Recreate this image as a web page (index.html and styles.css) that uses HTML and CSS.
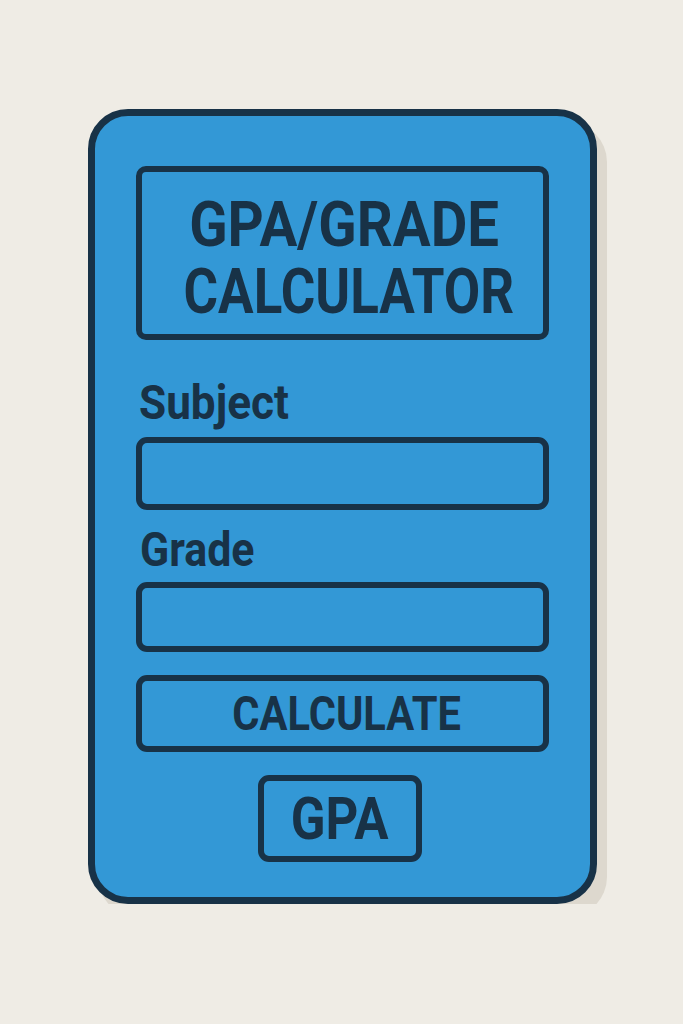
FILE: index.html
```html
<!DOCTYPE html>
<html lang="en">
<head>
  <meta charset="UTF-8">
  <meta name="viewport" content="width=device-width, initial-scale=1.0">
  <title>GPA/Grade Calculator</title>
  <link rel="stylesheet" href="styles.css">
</head>
<body>
  <div class="card">
    <div class="title-box">
      <h1><span class="title-line line-top"><span class="narrow">GPA/GRADE</span></span><span class="title-line line-bottom"><span class="narrow">CALCULATOR</span></span></h1>
    </div>
    <label class="field-label label-subject" for="subject"><span class="narrow">Subject</span></label>
    <input id="subject" class="field field-subject" type="text">
    <label class="field-label label-grade" for="grade"><span class="narrow">Grade</span></label>
    <input id="grade" class="field field-grade" type="text">
    <button class="calc-btn" type="button"><span class="narrow">CALCULATE</span></button>
    <div class="result"><span class="narrow">GPA</span></div>
  </div>
</body>
</html>
```

FILE: styles.css
```css
body {
  margin: 0;
  padding: 109px 0 0 88px;
  background-color: #efece5;
  font-family: Roboto, 'Liberation Sans', sans-serif;
  color: #183247;
}

.card {
  box-sizing: border-box;
  width: 509px;
  height: 795px;
  padding: 50px 41px 0;
  background-color: #3398d6;
  border: 7px solid #183247;
  border-radius: 40px;
  box-shadow: 10px 13px 0 #ddd8ce;
  display: flex;
  flex-direction: column;
}

/* condensed look for the bold headings */
.narrow {
  display: inline-block;
  transform: scaleX(0.85);
  white-space: nowrap;
}

.title-box {
  box-sizing: border-box;
  height: 174px;
  padding-top: 19px;
  border: 6px solid #183247;
  border-radius: 10px;
  text-align: center;
}

.title-box h1 {
  margin: 0;
  font-size: 63px;
  font-weight: 700;
  line-height: 67px;
}

.title-line {
  display: block;
  height: 67px;
}

.line-top {
  padding-left: 3px;
}

.line-top .narrow {
  transform: scaleX(0.895);
}

.line-bottom {
  padding-left: 10px;
}

.line-bottom .narrow {
  transform: scaleX(0.84);
}

.field-label {
  display: block;
  font-size: 49px;
  font-weight: 700;
  line-height: 56px;
}

.field-label .narrow {
  transform-origin: left center;
  transform: scaleX(0.9);
}

.label-subject {
  margin: 35px 0 6px 3px;
}

.label-grade {
  margin: 12px 0 4px 4px;
}

.label-grade .narrow {
  transform: scaleX(0.875);
}

.field {
  box-sizing: border-box;
  display: block;
  width: 100%;
  margin: 0;
  background: transparent;
  border: 6px solid #183247;
  border-radius: 11px;
  outline: none;
}

.field-subject {
  height: 73px;
}

.field-grade {
  height: 70px;
}

.calc-btn {
  box-sizing: border-box;
  height: 77px;
  margin-top: 23px;
  padding: 0 0 0 9px;
  background: transparent;
  border: 6px solid #183247;
  border-radius: 11px;
  font-family: inherit;
  font-size: 49px;
  font-weight: 700;
  color: #183247;
  cursor: pointer;
  display: flex;
  align-items: center;
  justify-content: center;
}

.result {
  box-sizing: border-box;
  align-self: center;
  width: 164px;
  height: 87px;
  margin-top: 23px;
  margin-left: -6px;
  border: 6px solid #183247;
  border-radius: 11px;
  font-size: 60px;
  font-weight: 700;
  display: flex;
  align-items: center;
  justify-content: center;
}
```
